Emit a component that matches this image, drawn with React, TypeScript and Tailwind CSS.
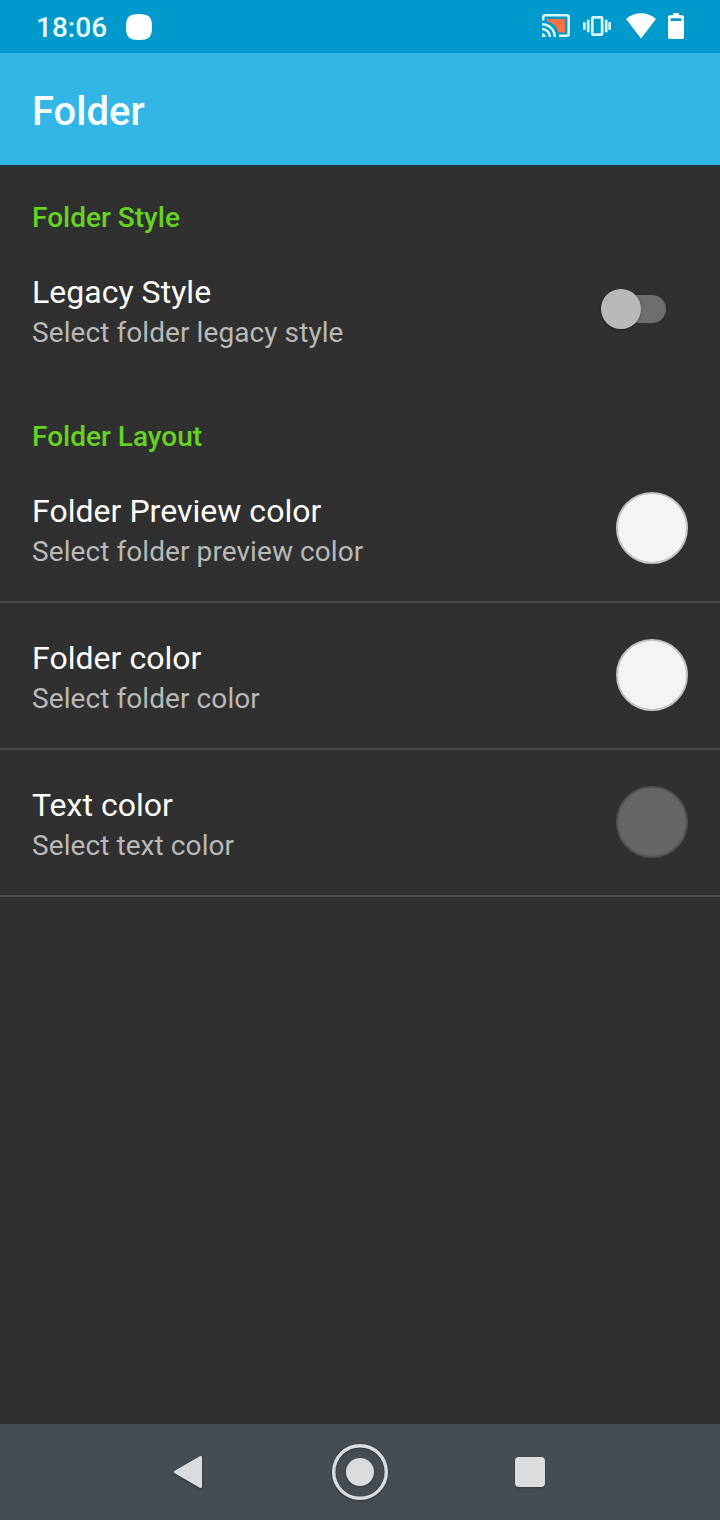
import type { ReactNode } from "react";

type PreferenceRowProps = {
  title: string;
  summary: string;
  divider?: boolean;
  children: ReactNode;
};

const colorRows = [
  { title: "Folder Preview color", summary: "Select folder preview color", swatch: "bg-[#f4f4f4] border-[#c3c3c3]" },
  { title: "Folder color", summary: "Select folder color", swatch: "bg-[#f4f4f4] border-[#c3c3c3]" },
  { title: "Text color", summary: "Select text color", swatch: "bg-[#666666] border-[#525252]" },
];

function CastIcon() {
  return (
    <svg width="28" height="24" viewBox="0 0 28 24" fill="none">
      <path d="M5 5H23V18.5H16C15.5 13 11 8.5 5 7.5Z" fill="#ff7043" />
      <path d="M1.2 6.5V3.2Q1.2 1.3 3.2 1.3H24.8Q26.7 1.3 26.7 3.2V19.8Q26.7 21.7 24.8 21.7H17" stroke="#d9f8ff" strokeWidth="2.6" />
      <path d="M0 10.2A12.8 12.8 0 0 1 12.8 23M0 15A8 8 0 0 1 8 23" stroke="#d9f8ff" strokeWidth="2.5" />
      <path d="M0 19.2A3.8 3.8 0 0 1 3.8 23H0Z" fill="#d9f8ff" />
    </svg>
  );
}

function VibrateIcon() {
  return (
    <svg width="28" height="20" viewBox="0 0 28 20" fill="none" stroke="#d9f8ff" strokeWidth="2.7">
      <rect x="9.3" y="1.3" width="9.8" height="17.4" rx="1" />
      <path d="M5.2 3.7V16.3M23.2 3.7V16.3M1.35 6.3V13.7M26.65 6.3V13.7" />
    </svg>
  );
}

function WifiIcon() {
  return (
    <svg width="30" height="26" viewBox="0 0 30 26" fill="#fff">
      <path d="M0 6C4.2 2.2 9.3 0.2 15 0.2S25.8 2.2 30 6L15 25.6Z" />
    </svg>
  );
}

function BatteryIcon() {
  return (
    <svg width="16" height="26" viewBox="0 0 16 26" fill="#fff">
      <path
        fillRule="evenodd"
        d="M5 0H11V2.2H14.3Q16 2.2 16 4V24.2Q16 26 14.3 26H1.7Q0 26 0 24.2V4Q0 2.2 1.7 2.2H5ZM2.6 5.2V8H13.4V5.2Z"
      />
    </svg>
  );
}

function StatusBar() {
  return (
    <div className="flex h-[53px] shrink-0 items-center bg-[#0099cc] px-9 pt-px">
      <span className="pt-px text-[28px] leading-8 font-medium text-[#e8fbff]">18:06</span>
      <svg className="ml-[19px]" width="26" height="26" viewBox="0 0 26 26">
        <path d="M13 0C23 0 26 3 26 13S23 26 13 26 0 23 0 13 3 0 13 0Z" fill="#fff" />
      </svg>
      <div className="ml-auto flex items-center gap-3 pb-0.5">
        <CastIcon />
        <span className="ml-px">
          <VibrateIcon />
        </span>
        <span className="ml-[3px]">
          <WifiIcon />
        </span>
        <BatteryIcon />
      </div>
    </div>
  );
}

function SectionHeader({ children }: { children: ReactNode }) {
  return (
    <h2 className="h-[72px] px-8 pt-[34px] text-[28px] leading-[38px] font-medium text-[#64d321]">{children}</h2>
  );
}

function PreferenceRow({ title, summary, divider = false, children }: PreferenceRowProps) {
  return (
    <div
      className={`flex h-[147px] items-start justify-between border-b-2 px-8 ${
        divider ? "border-[#4a4a4a]" : "border-transparent"
      }`}
    >
      <div className="pt-[34px]">
        <p className="text-[32px] leading-[42px] tracking-[0.03px] text-white">{title}</p>
        <p className="mt-px text-[28px] leading-[38px] tracking-[0.08px] text-[#b9b9b9]">{summary}</p>
      </div>
      <div className="flex h-36 items-center">{children}</div>
    </div>
  );
}

function Toggle() {
  return (
    <div className="mr-[22px] flex h-7 w-[60px] items-center rounded-full bg-[#6e6e6e]">
      <span className="-ml-[5px] size-10 rounded-full bg-[#b9b9b9] shadow-[0_1px_3px_rgba(0,0,0,0.3)]" />
    </div>
  );
}

function NavigationBar() {
  return (
    <div className="flex h-24 shrink-0 items-center bg-[#454d52]">
      <svg className="ml-[173px] drop-shadow-[0_1px_1px_rgba(0,0,0,0.3)]" width="30" height="34" viewBox="0 0 30 34">
        <path d="M2.5 17L27.5 2.5V31.5Z" fill="#dadcde" stroke="#dadcde" strokeWidth="3" strokeLinejoin="round" />
      </svg>
      <svg className="ml-[128px] drop-shadow-[0_1px_1px_rgba(0,0,0,0.3)]" width="58" height="58" viewBox="0 0 58 58">
        <circle cx="29" cy="29" r="26.3" fill="none" stroke="#dadcde" strokeWidth="3.4" />
        <circle cx="29" cy="29" r="14" fill="#dadcde" />
      </svg>
      <span className="ml-[126px] size-[30px] rounded-[4px] bg-[#dadcde] shadow-[0_1px_2px_rgba(0,0,0,0.3)]" />
    </div>
  );
}

export default function App() {
  return (
    <div className="flex h-[1520px] w-[720px] flex-col overflow-hidden bg-[#303030] font-['Roboto',sans-serif]">
      <StatusBar />
      <header className="flex h-28 shrink-0 items-center bg-[#33b5e5] px-8 pt-1.5">
        <h1 className="text-[40px] leading-[48px] font-medium text-[#f5fdff]">Folder</h1>
      </header>
      <main className="flex-1 border-t-2 border-[#1d333d]">
        <div className="-mt-0.5">
          <SectionHeader>Folder Style</SectionHeader>
          <PreferenceRow title="Legacy Style" summary="Select folder legacy style">
            <Toggle />
          </PreferenceRow>
          <SectionHeader>Folder Layout</SectionHeader>
          {colorRows.map((row) => (
            <PreferenceRow key={row.title} title={row.title} summary={row.summary} divider>
              <span className={`size-[72px] rounded-full border-2 ${row.swatch}`} />
            </PreferenceRow>
          ))}
        </div>
      </main>
      <NavigationBar />
    </div>
  );
}
